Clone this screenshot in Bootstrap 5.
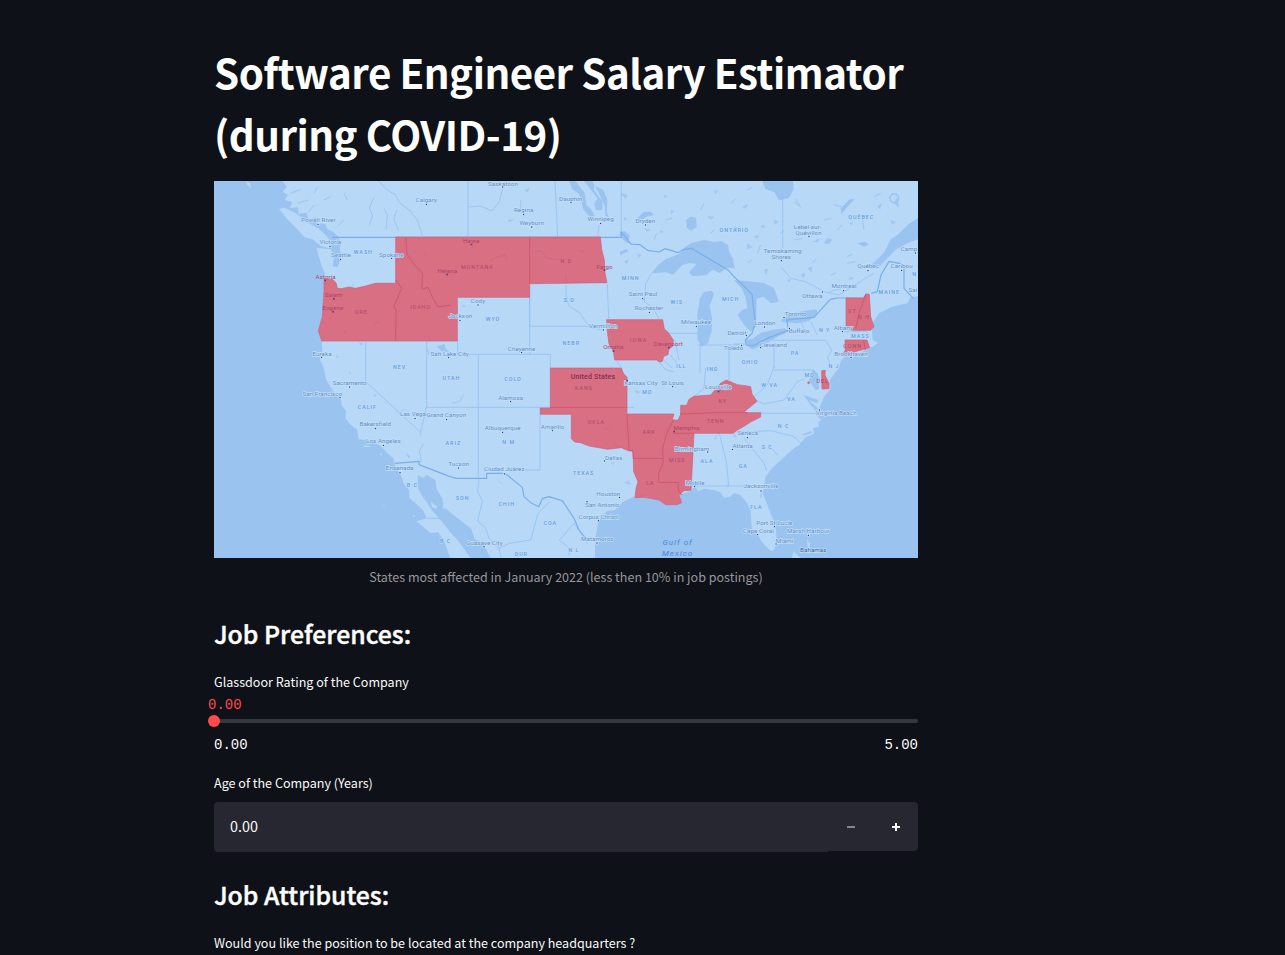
<!DOCTYPE html>
<html lang="en" data-bs-theme="dark">
<head>
<meta charset="utf-8">
<meta name="viewport" content="width=device-width, initial-scale=1">
<title>Software Engineer Salary Estimator</title>
<link href="https://cdn.jsdelivr.net/npm/bootstrap@5.3.0/dist/css/bootstrap.min.css" rel="stylesheet">
<style>
body{background:#0e1117;color:#fafafa;font-family:"Noto Sans CJK SC",sans-serif;height:955px;overflow:hidden}
.app-main{width:704px;margin-left:214px;padding-top:41px}
h1{font-size:40.3px;font-weight:700;line-height:62px;margin:0 0 16px;white-space:nowrap;letter-spacing:-.49px}
h2{font-size:24.8px;font-weight:500;line-height:34px;margin:0;white-space:nowrap;-webkit-text-stroke:.45px #fafafa}
.map-box{height:377px;width:704px}
.map-caption{font-size:12.55px;line-height:20px;color:#96979b;margin-top:9px;white-space:nowrap}
.field-label{font-size:12.55px;line-height:20px;white-space:nowrap}
.mono{font:14px/20px "Liberation Mono",monospace}
.rating-value{color:#ff4b4b;margin:3px 0 0 -6px}
.rail{height:4px;border-radius:2px;background:#363840;margin-top:4px}
.knob{width:12px;height:12px;border-radius:50%;background:#ff4b4b;left:-6px;top:-4px}
.number-box{height:50px;margin-top:9px}
.number-box .form-control{background:#262730;border:0;border-radius:4px 0 0 4px;color:#fafafa;font-size:14.4px;padding:0 16px 4px;height:50px;min-width:0}
.number-box .btn{width:45px;height:49px;background:#262730;border:0;border-radius:0;color:#fafafa;flex:none}
.number-box .btn:last-child{border-radius:0 4px 4px 0}
svg.us-map{display:block;width:704px;height:377px}
.city text{font:18.5px Roboto,sans-serif;fill:#5f8fc6;stroke:#c4dff8;stroke-width:4px;paint-order:stroke;letter-spacing:.3px}
.region text{font:500 16px Roboto,sans-serif;fill:#5b9be2;letter-spacing:3px;stroke:#c4dff8;stroke-width:3px;paint-order:stroke}
.inred text{font:16px Roboto,sans-serif;fill:#a9466a;letter-spacing:3px}
.inred .town{font-size:18.5px;letter-spacing:.3px}
</style>
</head>
<body>
<main class="app-main d-flex flex-column">
<h1>Software Engineer Salary Estimator<br>(during COVID-19)</h1>
<figure class="m-0">
<div class="map-box">
<svg class="us-map" viewBox="0 3 2112 1131" role="img" aria-label="Map of the United States">
<defs>
<g id="dot"><rect x="-3" y="-3" width="6" height="6" fill="#174f94" stroke="#d8ebfd" stroke-width="2"/></g>
</defs>
<rect y="3" width="2112" height="1131" fill="#9ac3ef"/>
<!-- mainland -->
<path fill="#b7d8f7" d="M205 3L218 20 206 35 222 45 212 60 234 66 228 84 252 82 254 102 276 98 284 116 306 112 312 130 334 132 340 148 358 156 372 170 382 190 376 208 382 236 370 262 356 258 360 235 352 208 308 203 320 250 332 280 330 297 328 400 313 452 323 483 325 510 318 540 330 564 334 590 340 606 362 640 378 652 384 678 396 692 394 714 408 732 430 750 434 778 470 783 500 798 520 820 538 835 543 855 560 885 570 912 585 930 586 954 610 974 628 992 638 1015 608 1024 650 1060 672 1056 690 1082 700 1110 708 1134H770L735 1085 708 1055 672 1010 655 992 625 948 612 925 611 885 628 895 638 884 664 900 667 925 684 955 690 980 708 997 738 1020 772 1046 782 1078 805 1090 830 1134H1143V1084L1153 1024 1178 994 1204 989 1228 965 1263 949 1290 952 1335 960 1355 974 1390 974 1403 968 1395 945 1432 932 1442 916 1452 934 1470 926 1498 930 1518 936 1530 954 1548 950 1560 940 1578 944 1600 970 1610 994 1613 1044 1628 1058 1640 1080 1652 1096 1672 1114 1680 1110 1688 1090 1686 1050 1678 1020 1660 974 1646 940 1655 889 1675 864 1740 804 1755 796 1775 772 1800 762 1798 744 1816 740 1812 728 1822 720 1806 704 1818 680 1830 650 1850 626 1848 600 1862 580 1875 564 1882 540 1895 528 1945 515 1980 498 1992 488 1976 480 1974 450 1978 425 1995 400 2030 382 2080 370 2090 352 2112 348V3z"/>
<path fill="#b7d8f7" d="M195 87L212 83 250 102 282 128 310 143 338 165 354 186 346 205 320 198 296 178 272 172 250 148 220 118zM95 3L108 9 111 25 100 15zM1734 1134l4-20 16 15 8 5zM1780 1075l5 14 5-4-4 18-6-6zM447 796l18 1 6 3-20 2zM498 820l6 2-3 6zM1945 484l32-5 6 12-24 3zM650 962l8 10 12 8-4 6-12-5zM688 970l5 10-1 10-6-8zM508 974l4 2-2 5zM598 1004l4 2-2 8z"/>
<!-- lakes and bays -->
<g fill="#9ac3ef">
<path d="M1313 280l20-26 22-16 45-18 12-18 22-14 36-8 30 6 22-3 20 12 3 19 12 22 5 29-22-2-22 16-22-10-20 17-41 3-10-12 22-25-20-3-22 6-28 29-20-7z"/>
<path d="M1470 336l22-4 8 10-13 35 7 37-1 38-11 38-20 10-12-22 0-76 8-47z"/>
<path d="M1560 300L1600 304 1650 309 1680 324 1694 365 1672 370 1648 350 1628 356 1626 440 1610 455 1595 440 1570 406 1584 390 1600 385 1594 350 1584 326zM1594 480L1614 476 1642 458 1680 449 1712 445 1724 455 1693 469 1659 489 1616 508 1604 501zM1702 426L1705 416 1737 399 1763 394 1808 388 1810 402 1784 423 1748 430zM1645 3L1654 27 1682 37 1695 61 1725 54 1739 27 1737 3zM2112 115L2085 131 2050 165 2031 177 2009 219 1969 259 1989 267 2017 238 2045 209 2081 189 2112 178z"/>
<path d="M1416 120l14-10 16 3 2 28-16 11-13-8zM1110 3l22 28 18 24-9 16 5 20 19 0 0-28-25-32 0-14 28 12 12 30-2 36 6 17-10-5-1-27-17-38-21-39zM1065 3l10 25 20 14 14 48 18 20 18 4-12-24-16-15-5-36-28-36zM1217 155l16-1 15 13-5 15 17 12-25-7-15-17zM1218 215l20-8 5 7-25 12zM1290 95l20 0 10 10-22 5-25 18-5-12zM310 140l34 24 26 16 12 45-12 24 2-40-34-40zM1930 190l24-5 10 9-15 6zM668 500l22-8 8 18 10 7-25-3zM576 252l20 18-10 2zM1235 1000l14-15 3 4zM1795 570l16 10 4 48-10 2-20-30zM1768 645l45 15-4 10-25-10 30 28-10 4zM1762 765l28-12 4 5-20 7z"/>
<path d="M575 815l13 16-4 2zM1880 85l28-28 14 1-22 22-17 23zM1528 235l14 12-4 8-22 2z"/>
</g>
<g fill="#9ac3ef" opacity=".8"><path d="M1220 40l20 5-5 12zM1290 145l20 5-12 5zM1370 90l12 4-12 8zM1480 108l20 3-10 9zM1560 138l18 8-14 8zM1600 190l16 12-18 5zM1680 120l16 5-14 9zM1795 185l22-10-5 12zM1780 265l15-7-3 18zM1830 190l10-16 16 4-12 15zM1650 270l12-4-5 20zM1720 300l10-4-4 12zM1500 30l12 2-8 10zM930 30l16-5-5 12zM880 120l20-2-12 8zM1230 245l14-7-5 14zM1585 80l18-8-8 14zM1620 170l14-6-4 12zM1750 215l18-4-8 10zM1760 285l14-8-4 18zM1640 140l10-6 2 10zM1905 130l12-4-4 10zM2040 70l9-20 7 35zM2030 120l16 6-12 8zM1990 80l12-12-3 20zM1910 290l10 6-15 4zM1270 220l12 5-8 8zM1340 150l10 6-12 2zM1350 45l10 3-8 6zM1230 110l10 8-9 4zM365 525l10 6-6 4zM435 485l12 6-6 6zM405 575l8 8-8-3zM480 643l8 2-8 6zM745 375l10 2-7 6zM853 901l12 10-6-2zM1230 910l14-8 8 12zM1165 865l12 12zM1190 845l10 3-2 8zM1260 630l20 5-10 6zM1560 755l8 20-8-5zM1660 790l35 38-9-5zM1640 930l5 20-6 5zM1515 840l12 12zM1500 775l12-14-9 20z"/></g>
<g fill="none" stroke="#9ac3ef" stroke-width="4"><circle cx="2041" cy="55" r="13"/>
<path stroke-width="2.5" d="M495 3q22 30 49 40l12 25 26 19 28 32 15 49M480 52l-14 33 10 20-10 32M510 85l10 20-4 45M548 90l-8 28 14 35M866 25l-10 40-22 28-34-15-37 3M1740 65l20 16-16-25M1700 260l30 35 45 10 55 30 45 10 45-28 60-38M1840 338l30-10 36-5M920 60l0 28M1980 50l20-10M1160 110l-10 60M1860 75l22 5M1900 250l25-5M575 690l-12 0M735 1065l-20-35M1400 564l-32-40M1760 420l15 45M1790 425l20 40M1950 150l-5-35 15-8M1490 160l12-12M1320 180l8-20M1355 120l20-6M1600 250l14-10M1630 220l10-25M1795 250l12-14M1700 160l10-8M1830 120l22-5M1740 180l25-5M1550 70l15-12M1460 90l10-20M1600 30l15-8M1850 285l15-6M1900 230l15-8M1870 150l14-15M715 670l22-6 12-20M640 505l4 20M230 40l30-12M250 70l34-10M280 100l20-25M330 60l20-10M370 140l20-20M410 320l10-8M390 40l10 20M300 40l10-18"/></g>
<!-- state and province borders -->
<g fill="none" stroke="#8dbced" stroke-width="2">
<path d="M762 3V171M1023 3l8 168M1222 3V172M1706 50V205M545 310h-60l-35 12M455 483V605l165 152 15-65 0-10M638 483V682M638 682H1260M793 523V895M730 523H1009V564M731 523V483M947 350V523M947 439H1118l40 10M947 310V439M978 682V870H925M620 757l-2 10M630 790l-14 22 6 30-8 10M1180 312l4 105M1205 540l18 24M1313 280l-18 30-4 55 25 18 20 35M1336 427q10 20 30 33H1450M1450 495H1590M1458 495V580M1545 495V600M1560 492H1680V564M1675 481H1835l18 30-12 22 12 30M1680 570H1800l20 35M1680 560l-20 55-45 40M1475 564l-5 60-35 30M1410 700H1830M1516 760l22 90 6 68H1435M1560 755h50l60-3 68 17 42 38M1538 918h110M1890 455h70M1590 775l60 75 8 22M1900 350v105M1615 655l35 17 60-12 40-55 45-20M1395 540l-12-60M1378 575l-24-6-30-40M795 895l-4 40 14 28-14 60 24 22 10 30 28 30 33-15 64-10 22-80 35-35M1080 1030l-30 35-14 15 30 25 0 20M1080 1030l40 60M850 1080l12 54M638 1015h45M1375 565l-30-28M1056 315v28l8 33 35 25 20 30 50 20"/>
</g>
<g fill="none" stroke="#79aee8" stroke-width="3.5" stroke-linejoin="round">
<path d="M355 172H1222V156L1236 173 1250 192 1278 194 1300 211 1335 216 1353 206 1393 218 1410 208 1432 205 1541 269 1560 290 1588 317 1614 343 1624 430 1614 460 1594 480 1597 495 1616 498 1660 475 1724 450 1718 420 1800 412 1848 359 1870 354H1962M1972 340L1990 335 2001 285 2025 244 2060 251 2070 255V325L2098 355M543 850L615 844 615 854 708 890 728 895H818V880H873L925 922 930 950 953 970 974 980 985 956 1005 950 1045 962 1080 1015 1095 1050 1120 1080"/>
</g>
<!-- highlighted states -->
<g fill="#d96f83" stroke="#d15e79" stroke-width="2" stroke-linejoin="round">
<path d="M545 171H1159L1163 208 1171 240 1173 280 1179 308 947 311V352H730V483H323L313 452 325 410 330 330V297L355 298 366 308 370 325 382 326 405 321 425 325 455 318 485 310H545z"/>
<path d="M1178 419H1346L1351 447 1363 458 1378 480 1376 498 1364 509 1362 524 1349 529 1345 544 1336 546 1328 540H1202L1198 513 1185 492 1180 455z"/>
<path d="M1009 564H1222L1228 580 1239 592V702H1380L1375 719 1392 721 1400 703V676L1418 676 1425 658 1440 649 1490 645 1520 610 1537 600 1570 614 1600 618 1610 620 1614 642 1629 664 1600 688 1588 698H1640V711L1610 726 1585 742 1565 753 1558 760H1440L1431 931 1410 932 1395 945 1403 968 1390 974 1355 974 1335 960 1290 952 1263 953 1266 925 1272 905 1259 875 1257 813 1243 812 1222 803 1180 808 1160 804 1125 798 1100 788 1082 786 1072 776V703H979V684H1009z"/>
<path d="M1896 354H1948L1956 342 1966 343 1970 410 1980 440 1970 451H1902L1896 440zM1893 480H1959L1967 503 1920 516 1886 525 1894 510zM1823 572L1834 571 1833 586 1845 610V626L1824 627z"/>
<circle cx="1784" cy="608" r="3"/>
</g>
<g fill="none" stroke="#ce5872" stroke-width="3"><path d="M575 172L579 222 601 254 626 281 623 328 642 322 654 350 672 380 708 376M545 300L563 324 540 379 546 391 545 483M947 171V310M1009 682H1239M1239 702L1245 811 1257 813 1258 835H1348M1378 720L1358 760 1346 805 1348 845 1334 879V907H1392L1393 930 1403 945M1378 760H1440M1398 702L1510 698H1600M1956 342L1938 390 1925 445M1949 480L1954 510"/>
<path stroke="#b85f80" stroke-opacity=".5" stroke-width="2" d="M958 215l25-3 14 22 42 6M826 243l18-10 30-8 4 15M1055 283v28M1095 210l18 8M628 218l10 12M560 220l8-12M480 430l15-4M390 448l5 16M1170 745l18 4M1200 790l16 12M1290 945l-12 5M1360 940l22 18M1530 620l20-15"/></g>
<!-- labels -->
<g class="region" text-anchor="middle">
<text x="448" y="223">WASH</text><text x="557" y="567">NEV</text><text x="712" y="600">UTAH</text><text x="460" y="687">CALIF</text><text x="595" y="922">B C</text><text x="718" y="795">ARIZ</text><text x="837" y="423">WYO</text><text x="1066" y="365">S D</text><text x="1072" y="494">NEBR</text><text x="1250" y="300">MINN</text><text x="1388" y="372">WIS</text><text x="1402" y="565">ILL</text><text x="897" y="603">COLO</text><text x="884" y="791">N M</text><text x="746" y="959">SON</text><text x="878" y="977">CHIH</text><text x="1009" y="1034">COA</text><text x="922" y="1128">DUR</text><text x="1080" y="1117">N L</text><text x="1109" y="884">TEXAS</text><text x="1300" y="642">MO</text><text x="1561" y="156">ONTARIO</text><text x="1942" y="117">QUÉBEC</text><text x="1550" y="362">MICH</text><text x="1832" y="456">N Y</text><text x="2026" y="342">MAINE</text><text x="1743" y="525">PA</text><text x="1608" y="553">OHIO</text><text x="1496" y="574">IND</text><text x="1787" y="590">MD</text><text x="1667" y="620">W VA</text><text x="1732" y="662">VA</text><text x="1709" y="744">N C</text><text x="1660" y="806">S C</text><text x="1479" y="848">ALA</text><text x="1588" y="865">GA</text><text x="1627" y="988">FLA</text><text x="1939" y="474">MASS</text><text x="2102" y="287">N</text><text x="1860" y="564">N J</text><text x="695" y="1090">B C</text>
</g>
<g class="inred" text-anchor="middle">
<text x="442" y="402">ORE</text><text x="620" y="386">IDAHO</text><text x="790" y="267">MONTANA</text><text x="1057" y="250">N D</text><text x="1274" y="485">IOWA</text><text x="1110" y="629">KANS</text><text x="1147" y="732">OKLA</text><text x="1305" y="762">ARK</text><text x="1309" y="916">LA</text><text x="1390" y="845">MISS</text><text x="1505" y="728">TENN</text><text x="1527" y="668">KY</text><text x="1915" y="400">VT</text><text x="1950" y="417">N H</text><text x="1916" y="504">CONN</text><text x="1826" y="608">DEL</text>
<text class="town" x="335" y="296">Astoria</text><text class="town" x="359" y="351">Salem</text><text class="town" x="357" y="390">Eugene</text><text class="town" x="700" y="278">Helena</text><text class="town" x="772" y="188">Havre</text><text class="town" x="1172" y="266">Fargo</text><text class="town" x="1198" y="507">Omaha</text><text class="town" x="1363" y="497">Davenport</text><text class="town" x="1418" y="751">Memphis</text>
</g>
<g class="city" text-anchor="middle">
<text x="313" y="126">Powell River</text><text x="349" y="193">Victoria</text><text x="381" y="230">Seattle</text><text x="532" y="230">Spokane</text><text x="637" y="66">Calgary</text><text x="867" y="17">Saskatoon</text><text x="929" y="97">Regina</text><text x="953" y="135">Weyburn</text><text x="1070" y="62">Dauphin</text><text x="1160" y="124">Winnipeg</text><text x="1294" y="129">Dryden</text><text x="324" y="527">Eureka</text><text x="707" y="527">Salt Lake City</text><text x="792" y="370">Cody</text><text x="739" y="414">Jackson</text><text x="923" y="513">Cheyenne</text><text x="1287" y="349">Saint Paul</text><text x="1305" y="391">Rochester</text><text x="1168" y="445">Vermillion</text><text x="1446" y="432">Milwaukee</text><text x="1781" y="148">Lebel-sur-</text><text x="1784" y="165">Quévillon</text><text x="1706" y="218">Temiskaming</text><text x="1702" y="236">Shores</text><text x="1963" y="265">Québec</text><text x="1890" y="324">Montreal</text><text x="1795" y="353">Ottawa</text><text x="1745" y="409">Toronto</text><text x="1653" y="435">London</text><text x="1569" y="464">Detroit</text><text x="1755" y="460">Buffalo</text><text x="1678" y="500">Cleveland</text><text x="1559" y="511">Toledo</text><text x="1888" y="449">Albany</text><text x="1911" y="527">Brookhaven</text><text x="2063" y="265">Caribou</text><text x="2110" y="212" text-anchor="end">Camp</text><text x="2110" y="336" text-anchor="end">Sai</text>
<text x="407" y="614">Sacramento</text><text x="325" y="649">San Francisco</text><text x="484" y="739">Bakersfield</text><text x="508" y="789">Los Angeles</text><text x="557" y="871">Ensenada</text><text x="602" y="708">Las Vegas</text><text x="697" y="711">Grand Canyon</text><text x="734" y="858">Tucson</text><text x="890" y="660">Alamosa</text><text x="866" y="750">Albuquerque</text><text x="871" y="873">Ciudad Juárez</text><text x="1016" y="748">Amarillo</text><text x="1199" y="840">Dallas</text><text x="1183" y="949">Houston</text><text x="1165" y="982">San Antonio</text><text x="1154" y="1016">Corpus Christi</text><text x="1150" y="1084">Matamoros</text><text x="811" y="1094">Guasave City</text><text x="1281" y="616">Kansas City</text><text x="1376" y="614">St Louis</text><text x="1513" y="628">Louisville</text><text x="1434" y="812">Birmingham</text><text x="1443" y="914">Mobile</text><text x="1601" y="766">Seneca</text><text x="1586" y="804">Atlanta</text><text x="1641" y="925">Jacksonville</text><text x="1867" y="705">Virginia Beach</text><text x="1681" y="1034">Port St Lucie</text><text x="1633" y="1058">Cape Coral</text><text x="1712" y="1088">Miami</text><text x="1783" y="1060">Marsh Harbour</text><text x="1798" y="1117" style="fill:#34609a">Bahamas</text>
</g>
<g>
<use href="#dot" x="312" y="133"/><use href="#dot" x="348" y="199"/><use href="#dot" x="380" y="238"/><use href="#dot" x="533" y="235"/><use href="#dot" x="637" y="73"/><use href="#dot" x="323" y="532"/><use href="#dot" x="866" y="21"/><use href="#dot" x="929" y="103"/><use href="#dot" x="953" y="141"/><use href="#dot" x="1071" y="68"/><use href="#dot" x="1160" y="130"/><use href="#dot" x="1294" y="135"/><use href="#dot" x="792" y="375"/><use href="#dot" x="738" y="421"/><use href="#dot" x="923" y="518"/><use href="#dot" x="1286" y="356"/><use href="#dot" x="1306" y="397"/><use href="#dot" x="1168" y="450"/><use href="#dot" x="704" y="533"/><use href="#dot" x="1447" y="439"/><use href="#dot" x="1785" y="169"/><use href="#dot" x="1702" y="242"/><use href="#dot" x="1962" y="272"/><use href="#dot" x="1889" y="332"/><use href="#dot" x="1825" y="336"/><use href="#dot" x="1710" y="412"/><use href="#dot" x="1652" y="441"/><use href="#dot" x="1597" y="467"/><use href="#dot" x="1726" y="445"/><use href="#dot" x="1639" y="503"/><use href="#dot" x="1583" y="496"/><use href="#dot" x="1885" y="455"/><use href="#dot" x="1911" y="533"/><use href="#dot" x="2063" y="271"/><use href="#dot" x="2104" y="219"/><use href="#dot" x="407" y="621"/><use href="#dot" x="378" y="653"/><use href="#dot" x="484" y="746"/><use href="#dot" x="508" y="796"/><use href="#dot" x="558" y="878"/><use href="#dot" x="603" y="716"/><use href="#dot" x="698" y="719"/><use href="#dot" x="733" y="864"/><use href="#dot" x="890" y="665"/><use href="#dot" x="866" y="757"/><use href="#dot" x="871" y="882"/><use href="#dot" x="1015" y="752"/><use href="#dot" x="1171" y="843"/><use href="#dot" x="1216" y="952"/><use href="#dot" x="1119" y="965"/><use href="#dot" x="1153" y="1022"/><use href="#dot" x="1149" y="1089"/><use href="#dot" x="810" y="1100"/><use href="#dot" x="1376" y="620"/><use href="#dot" x="1481" y="816"/><use href="#dot" x="1442" y="919"/><use href="#dot" x="1600" y="773"/><use href="#dot" x="1555" y="808"/><use href="#dot" x="1641" y="933"/><use href="#dot" x="1817" y="690"/><use href="#dot" x="1681" y="1040"/><use href="#dot" x="1631" y="1064"/><use href="#dot" x="1686" y="1092"/><use href="#dot" x="1783" y="1066"/>
</g>
<g fill="#603a78"><rect x="331" y="299" width="5" height="5"/><rect x="357" y="354" width="5" height="5"/><rect x="355" y="393" width="5" height="5"/><rect x="697" y="281" width="5" height="5"/><rect x="770" y="191" width="5" height="5"/><rect x="1169" y="268" width="5" height="5"/><rect x="1196" y="511" width="5" height="5"/><rect x="1362" y="500" width="5" height="5"/><rect x="1378" y="752" width="5" height="5"/><rect x="1511" y="632" width="5" height="5"/><rect x="1237" y="599" width="5" height="5"/></g>
<text x="1137" y="597" text-anchor="middle" font-family="Roboto,sans-serif" font-size="21" font-weight="500" letter-spacing=".6" fill="#793059">United States</text>
<g text-anchor="middle" font-family="Roboto,sans-serif" font-size="24" font-style="italic" letter-spacing="3" fill="#4289db"><text x="1391" y="1096">Gulf of</text><text x="1391" y="1127">Mexico</text></g>
</svg>
</div>
<figcaption class="map-caption text-center">States most affected in January 2022 (less then 10% in job postings)</figcaption>
</figure>
<h2 style="margin-top:29px">Job Preferences:</h2>
<section style="margin-top:22px">
<div class="field-label">Glassdoor Rating of the Company</div>
<div class="mono rating-value">0.00</div>
<div class="rail position-relative"><span class="knob position-absolute"></span></div>
<div class="mono d-flex justify-content-between" style="margin-top:12px"><span>0.00</span><span>5.00</span></div>
</section>
<section style="margin-top:18px">
<div class="field-label">Age of the Company (Years)</div>
<div class="number-box d-flex align-items-start">
<input class="form-control flex-grow-1" value="0.00" aria-label="Age of the Company">
<button class="btn p-0 d-flex align-items-center justify-content-center" aria-label="Decrease"><svg width="8" height="8"><path d="M0 3h8v2H0z" fill="#808495"/></svg></button>
<button class="btn p-0 d-flex align-items-center justify-content-center" aria-label="Increase"><svg width="8" height="8"><path d="M0 3h3V0h2v3h3v2H5v3H3V5H0z" fill="#fafafa"/></svg></button>
</div>
</section>
<h2 style="margin-top:25px">Job Attributes:</h2>
<div class="field-label" style="margin-top:22px">Would you like the position to be located at the company headquarters ?</div>
</main>
<script src="https://cdn.jsdelivr.net/npm/bootstrap@5.3.0/dist/js/bootstrap.bundle.min.js"></script>
</body>
</html>
